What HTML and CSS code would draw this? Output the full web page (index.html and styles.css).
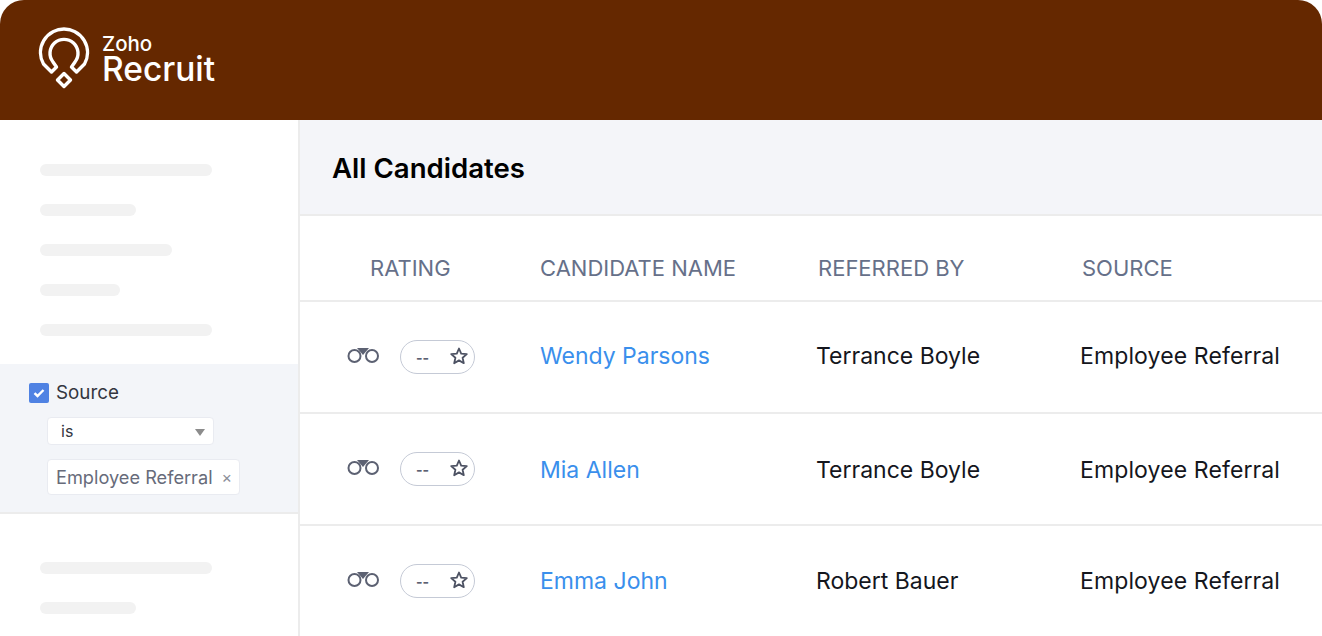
FILE: index.html
```html
<!DOCTYPE html>
<html lang="en">
<head>
  <meta charset="UTF-8">
  <meta name="viewport" content="width=device-width, initial-scale=1.0">
  <title>Zoho Recruit - All Candidates</title>
  <link rel="stylesheet" href="styles.css">
</head>
<body>
  <div class="app">
    <header class="topbar">
      <svg class="logo-mark" width="54" height="63" viewBox="37 27 54 63" fill="none" stroke="#fff" stroke-width="3.4" stroke-linejoin="round">
        <path d="M51.5 72 L43.5 64 A23.5 23.5 0 1 1 84.5 64 L76.5 72 L71.5 67 L75 62 A14 14 0 1 0 53 62 L56.5 67 Z"/>
        <path d="M64 73.5 L70.5 80 L64 86.5 L57.5 80 Z"/>
      </svg>
      <div class="brand">
        <span class="brand-small">Zoho</span>
        <span class="brand-big">Recruit</span>
      </div>
    </header>

    <div class="content">
      <aside class="sidebar">
        <div class="skeleton-group top">
          <div class="bar w172"></div>
          <div class="bar w96"></div>
          <div class="bar w132"></div>
          <div class="bar w80"></div>
          <div class="bar w172"></div>
        </div>

        <div class="filter">
          <label class="filter-label">
            <span class="checkbox">
              <svg width="12" height="10" viewBox="0 0 12 10" fill="none" stroke="#fff" stroke-width="2.4"><path d="M1.5 5.2 L4.5 8 L10.5 2"/></svg>
            </span>
            <span>Source</span>
          </label>
          <div class="select">
            <span>is</span>
            <span class="caret"></span>
          </div>
          <div class="chip">
            <span>Employee Referral</span>
            <span class="chip-x">×</span>
          </div>
        </div>

        <div class="skeleton-group bottom">
          <div class="bar w172"></div>
          <div class="bar w96"></div>
        </div>
      </aside>

      <main class="main">
        <div class="title-bar">
          <h1>All Candidates</h1>
        </div>

        <div class="row head">
          <div class="th th-rating">RATING</div>
          <div class="th th-name">CANDIDATE NAME</div>
          <div class="th">REFERRED BY</div>
          <div class="th">SOURCE</div>
        </div>

        <div class="row first">
          <div class="rating">
            <svg class="binoculars" width="32" height="16" viewBox="0 0 32 16" fill="none" stroke="#5c6172" stroke-width="2"><circle cx="7.5" cy="8" r="6"/><circle cx="25" cy="8" r="6"/><path d="M10 0 H22 L16 7 Z" fill="#5c6172" stroke="none"/></svg>
            <div class="pill">
              <span class="dash">--</span>
              <svg class="star" width="18" height="18" viewBox="0 0 18 18" fill="none" stroke="#4d5263" stroke-width="1.8" stroke-linejoin="round"><path d="M9 1.5 L11.2 6.6 L16.8 7.1 L12.6 10.8 L13.8 16.2 L9 13.4 L4.2 16.2 L5.4 10.8 L1.2 7.1 L6.8 6.6 Z"/></svg>
            </div>
          </div>
          <a class="name">Wendy Parsons</a>
          <div class="cell">Terrance Boyle</div>
          <div class="cell source">Employee Referral</div>
        </div>

        <div class="row second">
          <div class="rating">
            <svg class="binoculars" width="32" height="16" viewBox="0 0 32 16" fill="none" stroke="#5c6172" stroke-width="2"><circle cx="7.5" cy="8" r="6"/><circle cx="25" cy="8" r="6"/><path d="M10 0 H22 L16 7 Z" fill="#5c6172" stroke="none"/></svg>
            <div class="pill">
              <span class="dash">--</span>
              <svg class="star" width="18" height="18" viewBox="0 0 18 18" fill="none" stroke="#4d5263" stroke-width="1.8" stroke-linejoin="round"><path d="M9 1.5 L11.2 6.6 L16.8 7.1 L12.6 10.8 L13.8 16.2 L9 13.4 L4.2 16.2 L5.4 10.8 L1.2 7.1 L6.8 6.6 Z"/></svg>
            </div>
          </div>
          <a class="name">Mia Allen</a>
          <div class="cell">Terrance Boyle</div>
          <div class="cell source">Employee Referral</div>
        </div>

        <div class="row">
          <div class="rating">
            <svg class="binoculars" width="32" height="16" viewBox="0 0 32 16" fill="none" stroke="#5c6172" stroke-width="2"><circle cx="7.5" cy="8" r="6"/><circle cx="25" cy="8" r="6"/><path d="M10 0 H22 L16 7 Z" fill="#5c6172" stroke="none"/></svg>
            <div class="pill">
              <span class="dash">--</span>
              <svg class="star" width="18" height="18" viewBox="0 0 18 18" fill="none" stroke="#4d5263" stroke-width="1.8" stroke-linejoin="round"><path d="M9 1.5 L11.2 6.6 L16.8 7.1 L12.6 10.8 L13.8 16.2 L9 13.4 L4.2 16.2 L5.4 10.8 L1.2 7.1 L6.8 6.6 Z"/></svg>
            </div>
          </div>
          <a class="name">Emma John</a>
          <div class="cell">Robert Bauer</div>
          <div class="cell source">Employee Referral</div>
        </div>
      </main>
    </div>
  </div>
</body>
</html>
```

FILE: styles.css
```css
html, body {
  margin: 0;
  height: 100%;
  overflow: hidden;
  background-color: #ffffff;
}
body {
  font-family: Inter, "Noto Sans", sans-serif;
}
.app {
  width: 1322px;
  height: 636px;
  overflow: hidden;
  border-radius: 24px 24px 0 0;
  background-color: #ffffff;
}
.topbar {
  height: 120px;
  background-color: #652800;
  display: flex;
  align-items: flex-start;
  padding-left: 37px;
  box-sizing: border-box;
}
.logo-mark {
  margin-top: 27px;
}
.brand {
  display: flex;
  flex-direction: column;
  color: #ffffff;
  margin-left: 11px;
  margin-top: 34px;
}
.brand-small {
  font-size: 20.5px;
  line-height: 20px;
  font-weight: 500;
}
.brand-big {
  font-size: 33.5px;
  line-height: 31px;
  font-weight: 550;
}
.content {
  display: flex;
  height: 516px;
}
.sidebar {
  width: 298px;
  border-right: 2px solid #ececec;
  flex-shrink: 0;
}
.skeleton-group {
  display: flex;
  flex-direction: column;
  gap: 28px;
  padding-left: 40px;
}
.skeleton-group.top {
  padding-top: 44px;
  padding-bottom: 28px;
}
.skeleton-group.bottom {
  padding-top: 48px;
}
.bar {
  height: 12px;
  border-radius: 6px;
  background-color: #f2f2f2;
}
.w172 { width: 172px; }
.w132 { width: 132px; }
.w96 { width: 96px; }
.w80 { width: 80px; }
.filter {
  box-sizing: border-box;
  background-color: #f3f5f9;
  border-bottom: 2px solid #ececec;
  height: 150px;
  padding: 18px 0 0 29px;
}
.filter-label {
  display: flex;
  align-items: center;
  gap: 7px;
  font-size: 18.8px;
  line-height: 21px;
  color: #33363f;
}
.checkbox {
  width: 20px;
  height: 20px;
  border-radius: 2px;
  background-color: #4f82e3;
  display: flex;
  align-items: center;
  justify-content: center;
}
.select {
  width: 167px;
  height: 28px;
  box-sizing: border-box;
  margin: 14px 0 0 18px;
  padding: 0 8px 0 13px;
  display: flex;
  align-items: center;
  justify-content: space-between;
  background-color: #ffffff;
  border: 1px solid #e9ebf1;
  border-radius: 4px;
  font-size: 16px;
  color: #33363f;
}
.caret {
  width: 0;
  height: 0;
  border-left: 5.5px solid transparent;
  border-right: 5.5px solid transparent;
  border-top: 7px solid #8c8c8c;
  margin-top: 3px;
}
.chip {
  width: 193px;
  height: 36px;
  box-sizing: border-box;
  margin: 14px 0 0 18px;
  padding: 0 7px 0 8px;
  display: flex;
  align-items: center;
  justify-content: space-between;
  background-color: #ffffff;
  border: 1px solid #e9ebf1;
  border-radius: 4px;
  font-size: 18.2px;
  white-space: nowrap;
  color: #676b7a;
}
.chip-x {
  font-size: 16px;
  color: #8b8e99;
}
.main {
  flex: 1;
  min-width: 0;
}
.title-bar {
  height: 96px;
  box-sizing: border-box;
  background-color: #f4f5f9;
  border-bottom: 2px solid #ececec;
  display: flex;
  align-items: center;
  padding: 2px 0 0 32px;
}
.title-bar h1 {
  margin: 0;
  font-size: 27.6px;
  font-weight: 600;
  color: #000000;
}
.row {
  height: 112px;
  box-sizing: border-box;
  border-bottom: 2px solid #ececec;
  display: grid;
  grid-template-columns: 240px 276px 264px 1fr;
  align-items: center;
}
.row.head {
  height: 86px;
  padding-top: 20px;
}
.th {
  font-size: 22px;
  color: #667089;
  padding-left: 2px;
}
.th-name {
  padding-left: 0;
}
.th-rating {
  padding-left: 70px;
}
.rating {
  display: flex;
  align-items: center;
  padding-left: 47px;
}
.binoculars {
  margin: 0 21px 2px 0;
}
.pill {
  width: 75px;
  height: 34px;
  box-sizing: border-box;
  border: 1.5px solid #c5cad6;
  border-radius: 17px;
  display: flex;
  align-items: center;
  justify-content: space-between;
  padding: 0 6px 0 15px;
}
.star {
  margin-bottom: 2px;
}
.dash {
  font-size: 14px;
  font-weight: 700;
  color: #5c6172;
}
.name {
  font-size: 23px;
  color: #3a8fec;
}
.cell {
  font-size: 23px;
  color: #14161d;
  white-space: nowrap;
}
.source {
  letter-spacing: 0.12px;
}
/* text in these two rows sits a pixel off the row centre */
.row.first .name, .row.first .cell {
  margin-bottom: 2px;
}
.row.second .name, .row.second .cell {
  margin-top: 2px;
}
```
